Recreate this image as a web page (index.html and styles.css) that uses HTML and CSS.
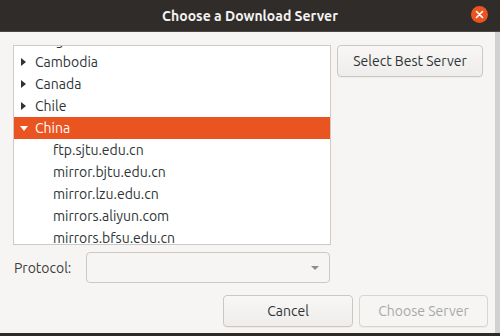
FILE: index.html
```html
<!DOCTYPE html>
<html lang="en">
<head>
  <meta charset="UTF-8" />
  <title>Choose a Download Server</title>
  <link rel="stylesheet" href="styles.css">
</head>
<body>
  <div class="window">
    <div class="titlebar">
      <span class="title">Choose a Download Server</span>
      <span class="close">
        <svg width="17" height="17" viewBox="0 0 17 17">
          <circle cx="8.5" cy="8.5" r="8.5" fill="#e95420"/>
          <path d="M5.5 5.5 L11.5 11.5 M11.5 5.5 L5.5 11.5" stroke="#fff" stroke-width="1.6" stroke-linecap="round"/>
        </svg>
      </span>
    </div>

    <div class="content">
      <div class="top-row">
        <div class="tree">
          <ul class="rows">
            <li class="row"><span class="arrow"></span>Bulgaria</li>
            <li class="row"><span class="arrow"></span>Cambodia</li>
            <li class="row"><span class="arrow"></span>Canada</li>
            <li class="row"><span class="arrow"></span>Chile</li>
            <li class="row selected"><span class="arrow open"></span>China</li>
            <li class="row child">ftp.sjtu.edu.cn</li>
            <li class="row child">mirror.bjtu.edu.cn</li>
            <li class="row child">mirror.lzu.edu.cn</li>
            <li class="row child">mirrors.aliyun.com</li>
            <li class="row child">mirrors.bfsu.edu.cn</li>
          </ul>
        </div>
        <button class="btn best">Select Best Server</button>
      </div>

      <div class="proto-row">
        <span class="label">Protocol:</span>
        <div class="combo"><span class="combo-arrow"></span></div>
      </div>

      <div class="actions">
        <button class="btn cancel">Cancel</button>
        <button class="btn choose" disabled>Choose Server</button>
      </div>
    </div>
  </div>
</body>
</html>
```

FILE: styles.css
```css
body {
  margin: 0;
  width: 500px;
  height: 336px;
  overflow: hidden;
  background: #2d2a28;
  font-family: "Ubuntu", "Liberation Sans", Arial, sans-serif;
  color: #2e3436;
}

.window {
  height: 333px;
  display: flex;
  flex-direction: column;
  background: #f6f5f4;
  border-right: 5px solid #d3d1cf;
}

.titlebar {
  height: 31px;
  flex: none;
  background: #2f2c29;
  border-bottom: 1px solid #4a4643;
  display: flex;
  align-items: center;
  justify-content: center;
  position: relative;
  margin-right: -5px;
}

.title {
  color: #f4f3f1;
  font-weight: bold;
  font-size: 14px;
}

.close {
  position: absolute;
  right: 12px;
  top: 6px;
  height: 17px;
}

.content {
  flex: 1;
  padding: 13px 0 0 13px;
  display: flex;
  flex-direction: column;
}

.top-row {
  display: flex;
  gap: 6px;
}

.tree {
  width: 316px;
  height: 198px;
  border: 1px solid #cdc9c5;
  background: #fff;
  overflow: hidden;
}

/* list is scrolled down a little, first row shows only its bottom */
.rows {
  list-style: none;
  margin: -17px 0 0;
  padding: 0;
}

.row {
  height: 22px;
  line-height: 22px;
  font-size: 14px;
  padding-left: 7px;
  display: flex;
  align-items: center;
}

.row.child {
  padding-left: 39px;
}

.arrow {
  width: 0;
  height: 0;
  border-left: 5px solid #2e3436;
  border-top: 4px solid transparent;
  border-bottom: 4px solid transparent;
  margin-right: 9px;
}

.arrow.open {
  border-left: 4px solid transparent;
  border-right: 4px solid transparent;
  border-top: 5px solid #fff;
  border-bottom: none;
  margin-left: -1px;
  margin-right: 7px;
}

.row.selected {
  background: #e95420;
  color: #fff;
}

.btn {
  font-family: inherit;
  font-size: 14px;
  color: #2e3436;
  background: linear-gradient(#f8f7f6, #efedec);
  border: 1px solid #cdc7c2;
  border-radius: 4px;
  height: 32px;
  padding: 0;
  box-shadow: 0 1px 0 rgba(0, 0, 0, 0.04);
}

.best {
  width: 146px;
}

.proto-row {
  display: flex;
  align-items: center;
  margin-top: 7px;
}

.label {
  flex: none;
  font-size: 14px;
  color: #3d3d3d;
  width: 72px;
  padding-left: 1px;
}

.combo {
  width: 242px;
  height: 29px;
  border: 1px solid #cdc7c2;
  border-radius: 4px;
  background: #f6f5f4;
  display: flex;
  align-items: center;
  justify-content: flex-end;
}

.combo-arrow {
  width: 0;
  height: 0;
  border-left: 4px solid transparent;
  border-right: 4px solid transparent;
  border-top: 4px solid #8b8e8f;
  margin-right: 10px;
}

.actions {
  display: flex;
  justify-content: flex-end;
  gap: 6px;
  margin-top: 12px;
  padding-right: 7px;
}

.cancel {
  width: 130px;
}

.choose {
  width: 129px;
  color: #a7a9a9;
  background: #f6f5f4;
  border-color: #d8d4d0;
}
```
